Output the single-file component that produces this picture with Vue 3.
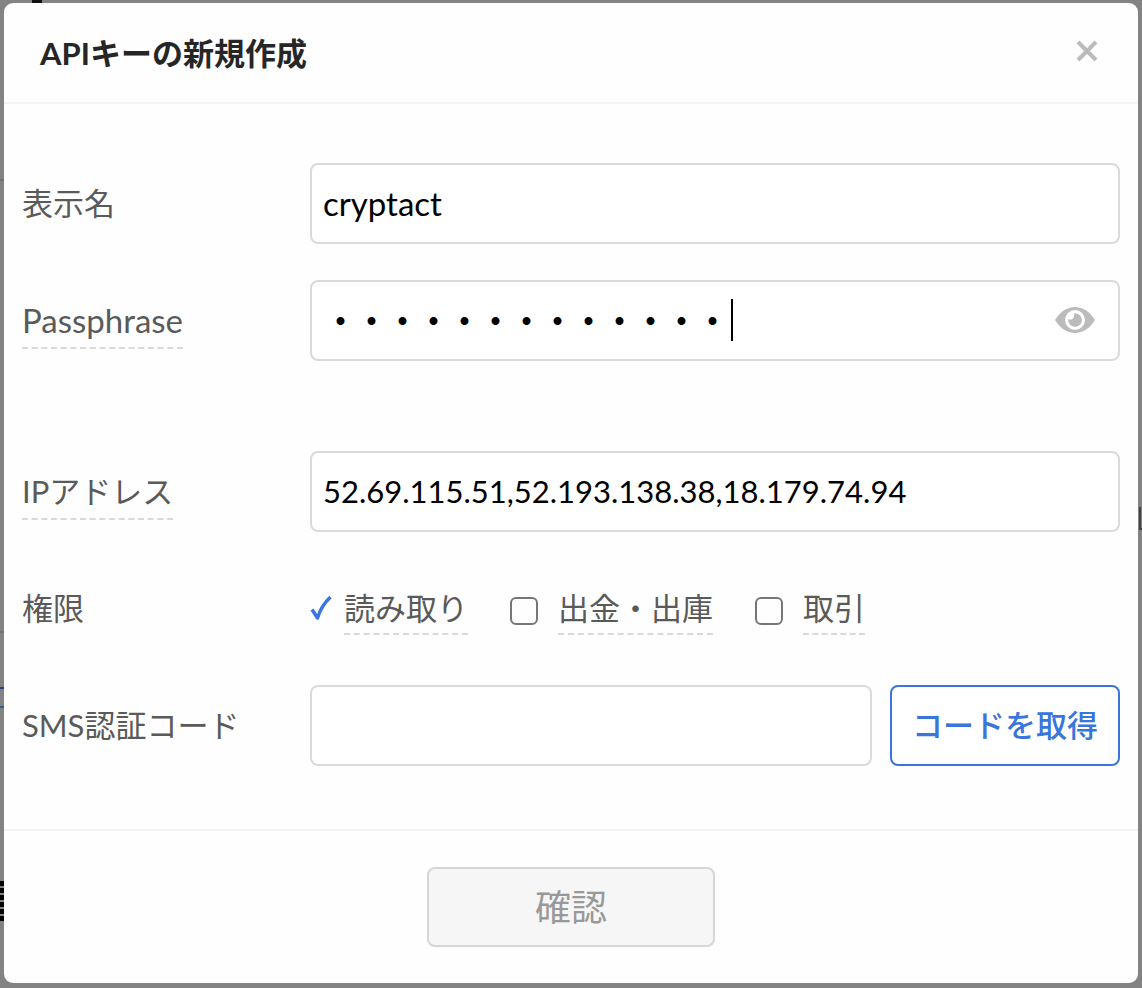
<template>
  <div class="backdrop">
    <div class="behind" aria-hidden="true">
      <span class="scrap heading"></span>
      <span class="scrap rule upper"></span>
      <span class="scrap rule lower"></span>
      <span class="scrap link"></span>
      <span class="scrap code"></span>
      <span class="scrap letter"></span>
    </div>

    <form class="modal" role="dialog" aria-labelledby="modal-title" @submit.prevent>
      <header class="modal-head">
        <h1 id="modal-title" class="title">APIキーの新規作成</h1>
        <button type="button" class="close" aria-label="閉じる">
          <svg viewBox="0 0 22 22" width="22" height="22">
            <path d="M2 2L20 20M20 2L2 20" fill="none" stroke="currentColor" stroke-width="4" />
          </svg>
        </button>
      </header>

      <div class="modal-body">
        <div class="row">
          <div class="label-cell"><label for="name">表示名</label></div>
          <input id="name" v-model="name" class="field latin" type="text" />
        </div>

        <div class="row spaced">
          <div class="label-cell"><label for="pass" class="hint latin">Passphrase</label></div>
          <div class="pass-wrap">
            <input id="pass" v-model="passphrase" class="field pass" :type="visible ? 'text' : 'password'" />
            <span v-if="!visible" class="caret" :style="{ left: caretLeft }"></span>
            <button type="button" class="eye" aria-label="表示" @click="visible = !visible">
              <svg viewBox="0 0 40 26" width="40" height="26">
                <path
                  fill="currentColor"
                  fill-rule="evenodd"
                  d="M0 13C5 5 12 0 20 0s15 5 20 13c-5 8-12 13-20 13S5 21 0 13zM20 3a10 10 0 1 0 0 20a10 10 0 1 0 0-20z"
                />
                <path fill="currentColor" d="M19 6.3A6.8 6.8 0 1 1 13.3 12c1.5 1.2 3.4.8 4.6-.4c1.2-1.2 1.6-3.6 1.1-5.3z" />
              </svg>
            </button>
          </div>
        </div>

        <div class="row">
          <div class="label-cell"><label for="ip" class="hint">IPアドレス</label></div>
          <input id="ip" v-model="ip" class="field" type="text" />
        </div>

        <div class="row">
          <div class="label-cell"><span>権限</span></div>
          <div class="perms">
            <label v-for="p in perms" :key="p.label" class="perm" :class="{ on: p.checked }">
              <span class="box">
                <input v-model="p.checked" type="checkbox" />
                <svg v-if="p.checked" viewBox="0 0 22 26" width="22" height="26">
                  <path
                    d="M2 14.5L7.5 23C10 15 14 8 20.5 2"
                    fill="none"
                    stroke="currentColor"
                    stroke-width="3.5"
                    stroke-linejoin="round"
                  />
                </svg>
              </span>
              <span class="hint">{{ p.label }}</span>
            </label>
          </div>
        </div>

        <div class="row">
          <div class="label-cell"><label for="sms">SMS認証コード</label></div>
          <div class="sms">
            <input id="sms" v-model="sms" class="field" type="text" />
            <button type="button" class="get-code">コードを取得</button>
          </div>
        </div>
      </div>

      <footer class="modal-foot">
        <button type="submit" class="confirm" disabled>確認</button>
      </footer>
    </form>
  </div>
</template>

<script setup>
import { ref, reactive, computed } from 'vue'

const name = ref('cryptact')
const passphrase = ref('passphrase123')
const ip = ref('52.69.115.51,52.193.138.38,18.179.74.94')
const sms = ref('')
const visible = ref(false)

const perms = reactive([
  { label: '読み取り', checked: true },
  { label: '出金・出庫', checked: false },
  { label: '取引', checked: false },
])

// masked characters are one em wide
const caretLeft = computed(() => `calc(18px + ${passphrase.value.length}em)`)
</script>

<style>
body {
  background: #838383;
}
</style>

<style scoped>
.backdrop {
  position: relative;
  box-sizing: border-box;
  min-height: 100vh;
  padding: 3px 4px 5px;
  overflow: hidden;
  font-family: Lato, "Noto Sans CJK JP", sans-serif;
  font-size: 31px;
  line-height: 44px;
  color: #5a5a5a;
}

/* bits of the page that show round the dialog */
.scrap {
  position: absolute;
  left: 0;
  width: 4px;
}
.heading {
  top: 0;
  left: 32px;
  width: 10px;
  height: 3px;
  background: #111;
}
.rule {
  height: 2px;
  background: #737373;
}
.upper { top: 179px; }
.lower { top: 631px; }
.link {
  top: 687px;
  height: 17px;
  border-top: 2px solid #2c3f85;
  border-bottom: 2px solid #2a6096;
}
.code {
  top: 881px;
  height: 40px;
  background: repeating-linear-gradient(#000 0 5px, #838383 5px 7px);
}
.letter {
  top: 507px;
  left: auto;
  right: 0;
  box-sizing: border-box;
  width: 3px;
  height: 23px;
  border-left: 2px solid #444;
  border-bottom: 2px solid #444;
}

.modal {
  position: relative;
  background: #fefefe;
  border-radius: 9px;
}

.modal-head {
  display: flex;
  justify-content: space-between;
  align-items: center;
  box-sizing: border-box;
  height: 101px;
  padding: 0 40px 0 36px;
  border-bottom: 2px solid #f4f4f4;
}
.title {
  margin: 0;
  font-size: 31px;
  font-weight: 700;
  color: #262626;
}
.close {
  display: flex;
  padding: 0;
  margin-bottom: 4px;
  border: none;
  background: none;
  color: #bbb;
  cursor: pointer;
}

.modal-body {
  display: flex;
  flex-direction: column;
  gap: 36px;
  padding: 59px 18px 63px;
}
.row {
  display: grid;
  grid-template-columns: 288px 1fr;
  align-items: center;
  min-height: 81px;
}
.row.spaced {
  margin-bottom: 54px;
}
.label-cell {
  display: flex;
  align-items: center;
  padding-bottom: 2px;
}
.hint {
  padding: 5px 0;
  border-bottom: 2px dashed #d9d9d9;
  margin-bottom: -2px;
}

.field {
  box-sizing: border-box;
  width: 100%;
  min-width: 0;
  height: 81px;
  padding: 0 11px 2px;
  border: 2px solid #dadada;
  border-radius: 8px;
  background: #fff;
  font: inherit;
  color: #000;
  outline: none;
}
.field.latin,
.hint.latin {
  font-size: 33px;
}
.pass-wrap {
  position: relative;
}
.pass {
  display: block;
  padding: 0 80px 4px 13px;
  font-family: "Noto Sans CJK SC", sans-serif;
  font-variant-east-asian: full-width;
  font-weight: 700;
}
.caret {
  position: absolute;
  top: 19px;
  width: 2px;
  height: 42px;
  background: #000;
}
.eye {
  position: absolute;
  top: 27px;
  right: 25px;
  display: flex;
  padding: 0;
  border: none;
  background: none;
  color: #bbb;
  cursor: pointer;
}

.perms {
  display: flex;
  flex-wrap: wrap;
  gap: 42px;
  padding-bottom: 2px;
}
.perm {
  display: flex;
  align-items: center;
  gap: 20px;
  cursor: pointer;
}
.perm.on {
  gap: 12px;
}
.perm .hint {
  padding: 3px 0;
}
.box {
  display: grid;
  place-items: center;
  padding-top: 6px;
  color: #3a75e0;
}
.on .box {
  padding-top: 0;
}
.box > * {
  grid-area: 1 / 1;
}
.box input {
  appearance: none;
  box-sizing: border-box;
  width: 28px;
  height: 28px;
  margin: 0;
  border: 2px solid #767676;
  border-radius: 6px;
}
.box input:checked {
  width: 22px;
  border: none;
}

.sms {
  display: grid;
  grid-template-columns: 1fr 230px;
  gap: 18px;
}
.get-code {
  padding: 0 0 2px;
  border: 2px solid #3a75dc;
  border-radius: 8px;
  background: #fff;
  font: inherit;
  font-weight: 500;
  color: #3a75dc;
  cursor: pointer;
}

.modal-foot {
  display: flex;
  justify-content: center;
  padding: 36px;
  border-top: 2px solid #f3f3f3;
}
.confirm {
  width: 288px;
  height: 80px;
  padding: 0;
  border: 2px solid #d6d6d6;
  border-radius: 8px;
  background: #f6f6f6;
  font: inherit;
  font-size: 36px;
  color: #999;
}
</style>
